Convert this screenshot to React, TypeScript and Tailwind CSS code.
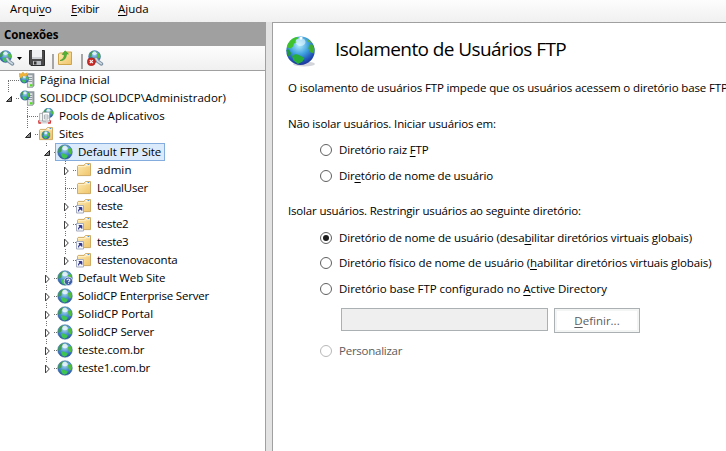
import type { ReactNode } from "react";

type TreeIcon =
  | "start"
  | "server"
  | "pools"
  | "sites"
  | "site"
  | "siteUnknown"
  | "folder"
  | "shortcut";

type Node = {
  label: string;
  level: number;
  icon: TreeIcon;
  state?: "open" | "closed";
  // guide line of the node's own level
  up?: boolean;
  down?: boolean;
  selected?: boolean;
  tracking?: string;
};

const nodes: Node[] = [
  { label: "Página Inicial", level: 0, icon: "start", down: true },
  { label: "SOLIDCP (SOLIDCP\\Administrador)", level: 0, icon: "server", state: "open", up: true, tracking: "tracking-[0.03px]" },
  { label: "Pools de Aplicativos", level: 1, icon: "pools", up: true, down: true },
  { label: "Sites", level: 1, icon: "sites", state: "open", up: true, tracking: "tracking-[-0.15px]" },
  { label: "Default FTP Site", level: 2, icon: "site", state: "open", up: true, down: true, selected: true, tracking: "tracking-[-0.05px]" },
  { label: "admin", level: 3, icon: "folder", state: "closed", up: true, down: true, tracking: "tracking-[0.1px]" },
  { label: "LocalUser", level: 3, icon: "folder", up: true, down: true, tracking: "tracking-[-0.18px]" },
  { label: "teste", level: 3, icon: "shortcut", state: "closed", up: true, down: true, tracking: "tracking-[-0.15px]" },
  { label: "teste2", level: 3, icon: "shortcut", state: "closed", up: true, down: true, tracking: "tracking-[-0.3px]" },
  { label: "teste3", level: 3, icon: "shortcut", state: "closed", up: true, down: true, tracking: "tracking-[-0.3px]" },
  { label: "testenovaconta", level: 3, icon: "shortcut", state: "closed", up: true, tracking: "tracking-[-0.15px]" },
  { label: "Default Web Site", level: 2, icon: "siteUnknown", state: "closed", up: true, down: true, tracking: "tracking-[-0.1px]" },
  { label: "SolidCP Enterprise Server", level: 2, icon: "site", state: "closed", up: true, down: true, tracking: "tracking-[-0.19px]" },
  { label: "SolidCP Portal", level: 2, icon: "site", state: "closed", up: true, down: true },
  { label: "SolidCP Server", level: 2, icon: "site", state: "closed", up: true, down: true, tracking: "tracking-[-0.1px]" },
  { label: "teste.com.br", level: 2, icon: "site", state: "closed", up: true, down: true, tracking: "tracking-[-0.08px]" },
  { label: "teste1.com.br", level: 2, icon: "site", state: "closed", up: true, tracking: "tracking-[-0.15px]" },
];

function Globe() {
  return (
    <g>
      <circle cx="8" cy="8" r="7.3" fill="url(#ocean)" stroke="#3b629c" strokeWidth="0.5" />
      <path d="M1.2 8.4 1.6 5 4 2.2 6.6 1.2 6.2 3.2 4.4 4.6 4.6 6.8 3 8.6z" fill="#3f9c4a" />
      <path d="M11 5.2 12.4 4 14 4.6 14.9 7.4 14.4 10 12.6 10.2 11.4 8z" fill="#4fc03a" />
      <path d="M4 10 6.4 9.2 8.6 10.4 11 11.4 9.6 13.8 7.4 14.7 5 13.2z" fill="#3fc552" />
      <ellipse cx="8" cy="4" rx="2.8" ry="2.2" fill="#eef7fc" opacity="0.8" />
      <path d="M9 1.4 11.4 2 10.6 3.6z" fill="#5aa765" />
    </g>
  );
}

function Tower() {
  return (
    <g>
      <path d="M8 2.6 9.2 1.2H15.4V13.8L13.8 15.6H8z" fill="#8f989e" />
      <path d="M8.4 2.8H13.8V15.2H8.4z" fill="#dfe3e5" stroke="#8b9398" strokeWidth="0.6" />
      <path d="M9 5.5H13.2M9 7.5H13.2M9 9.5H13.2" stroke="#7d868c" strokeWidth="0.8" />
      <path d="M11 12.2H13.4V14.4H11z" fill="#4fe01c" />
    </g>
  );
}

function Folder() {
  return (
    <g>
      <path d="M1.5 4.2 2.2 3.4H8L9.4 1.6H14.5V13.6H1.5z" fill="url(#folder)" stroke="#c9a45a" strokeWidth="0.9" />
      <path d="M9.4 2.8H14" stroke="#fff" strokeWidth="1.4" />
      <path d="M11.6 2.6H13.4" stroke="#3d8fd2" strokeWidth="1" />
      <path d="M2 4.6H9.4L10.4 3.8H14" fill="none" stroke="#fff3cf" strokeWidth="0.8" />
    </g>
  );
}

function NodeIcon({ name }: { name: TreeIcon }) {
  return (
    <svg width="16" height="16" viewBox="0 0 16 16" className="shrink-0">
      {name === "start" && (
        <>
          <Tower />
          <g transform="translate(.6 2) scale(.6)"><Globe /></g>
          <path d="M0 1.4 2.4 1.8 4 0 5.4 1.8 8.4 .8 8 3.4 6.6 4.4 4.8 3.6 3 4.8 2.4 6.6 .6 5z" fill="#f0b43a" stroke="#cf9226" strokeWidth="0.4" />
        </>
      )}
      {name === "server" && (
        <>
          <Tower />
          <g transform="translate(.8 .2) scale(.66)"><Globe /></g>
        </>
      )}
      {name === "pools" && (
        <>
          <g transform="translate(5 -.4) scale(.68)"><Globe /></g>
          <path d="M1.6 5.4H8V13H1.6z" fill="#f7f7f7" stroke="#a0a4a8" strokeWidth="0.8" />
          <path d="M4.6 4.2H11.6V13H4.6z" fill="#fff" stroke="#8b9095" strokeWidth="0.8" />
          <path d="M6.4 7H10V11H6.4zM6.4 9H10" fill="none" stroke="#9ba2a8" strokeWidth="0.8" />
          <path d="M0.6 12.4 1 15H3M12.6 12.4 12.2 15H10" fill="none" stroke="#d23434" strokeWidth="1.3" />
          <path d="M3 14.8H10" stroke="#c6cacd" strokeWidth="1.2" />
        </>
      )}
      {name === "sites" && (
        <>
          <Folder />
          <g transform="translate(3.4 4.6) scale(.56)"><Globe /></g>
        </>
      )}
      {name === "site" && <Globe />}
      {name === "siteUnknown" && (
        <>
          <Globe />
          <circle cx="11.4" cy="11.3" r="4.2" fill="#3d5fa8" stroke="#dfe7f5" strokeWidth="0.9" />
          <path d="M9.9 10.2C10 8.6 13 8.7 12.9 10.3 12.8 11.2 11.5 11.2 11.5 12.3M11.5 13.2V14" fill="none" stroke="#fff" strokeWidth="1.1" />
        </>
      )}
      {name === "folder" && <Folder />}
      {name === "shortcut" && (
        <>
          <Folder />
          <path d="M.5 7.5H7.5V15H.5z" fill="#f4f6fb" stroke="#a5acc0" />
          <path d="M2.6 13.4C2.4 11.6 3 11 4.4 10.8M3 9.6H5.8V12.4z" fill="#2b2f86" stroke="#2b2f86" strokeWidth="1" />
        </>
      )}
    </svg>
  );
}

function Guide({ node }: { node: Node }) {
  return (
    <svg width="19" height="18" viewBox="0 0 19 18" className="shrink-0">
      <g stroke="#707070" strokeDasharray="1 1" shapeRendering="crispEdges">
        {node.up && <path d="M8.5 0V10" />}
        {node.down && <path d="M8.5 10V18" />}
        <path d="M8 9.5H19" />
      </g>
      {node.state && <path d="M3 3H15V16H3z" fill="#fff" />}
      {node.state === "closed" && (
        <path d="M7.500 6V14L11.300 10z" fill="#fff" stroke="#404040" />
      )}
      {node.state === "open" && (
        <path d="M11.500 7.500V12.500H6.500z" fill="#8a8a8a" stroke="#262626" />
      )}
    </svg>
  );
}

function TreeRow({ node }: { node: Node }) {
  return (
    <div className="flex h-[18px] items-center">
      {[0, 1, 2].slice(0, node.level).map((level) => (
        <svg key={level} width="19" height="18" className="shrink-0">
          {level === 2 && (
            <path d="M8.5 0V18" stroke="#707070" strokeDasharray="1 1" shapeRendering="crispEdges" />
          )}
        </svg>
      ))}
      <Guide node={node} />
      <div
        className={
          node.selected
            ? "-ml-0.5 flex h-[18px] w-[110px] items-center border border-[#84acdd] bg-[#dcebfc] pl-px"
            : "flex h-[18px] items-center"
        }
      >
        <NodeIcon name={node.icon} />
        <span className={"ml-[5px] whitespace-nowrap " + (node.tracking ?? "")}>{node.label}</span>
      </div>
    </div>
  );
}

function Key({ children }: { children: ReactNode }) {
  return <span className="underline decoration-1 underline-offset-2">{children}</span>;
}

function Radio({
  checked,
  disabled,
  className,
  children,
}: {
  checked?: boolean;
  disabled?: boolean;
  className: string;
  children: ReactNode;
}) {
  return (
    <label className={"flex h-[18px] items-center pl-[47px] " + className}>
      <span
        className={
          "mr-[7px] flex size-3 shrink-0 items-center justify-center rounded-full border bg-white " +
          (disabled ? "border-[#b8b8b8]" : "border-[#606060]")
        }
      >
        {checked && <span className="size-1.5 rounded-full bg-[#1c1c1c]" />}
      </span>
      <span className={"whitespace-nowrap " + (disabled ? "text-[#5c5c5c]" : "")}>{children}</span>
    </label>
  );
}

function GlobeTool({ remove }: { remove?: boolean }) {
  return (
    <svg width="17" height="16" viewBox="0 0 17 16" className="shrink-0">
      <g transform="translate(1 0) scale(.82)"><Globe /></g>
      <path d="M9 8.5 11 11.500 14.5 14" fill="none" stroke="#7f93a4" strokeWidth="3.4" strokeLinecap="round" />
      <path d="M9 8.5 11 11.500 14.2 13.700" fill="none" stroke="#cfdae3" strokeWidth="1.6" strokeLinecap="round" />
      {remove && (
        <>
          <circle cx="4.3" cy="11.7" r="4" fill="#cf2a26" stroke="#8e1712" strokeWidth="0.5" />
          <path d="M2.8 10.2 5.8 13.2M5.8 10.2 2.8 13.2" stroke="#fff" strokeWidth="1.2" />
        </>
      )}
    </svg>
  );
}

function Toolbar() {
  return (
    <div className="flex h-6 items-center bg-gradient-to-b from-[#fdfdfd] to-[#f0f0f0]">
      <div className="-ml-0.5"><GlobeTool /></div>
      <svg width="5" height="3" viewBox="0 0 5 3" className="ml-0.5">
        <path d="M0 0H5L2.5 3z" fill="#000" />
      </svg>
      <svg width="16" height="16" viewBox="0 0 16 16" className="ml-[7px]">
        <path d="M.5 .5H15.5V15.5H2L.5 14z" fill="#4a4a4a" stroke="#2d2d2d" />
        <path d="M3 0H13V9H3z" fill="#eef0f2" />
        <path d="M3 7H13V9H3z" fill="#cdd1d5" />
        <path d="M4 11H12V15H4z" fill="#b9bdc1" />
        <path d="M5 11.500H7.500V14.500H5z" fill="#333" />
      </svg>
      <span className="ml-[7px] mt-1.5 h-[15px] w-0.5 bg-[#a6a6a6]" />
      <svg width="15" height="16" viewBox="0 0 15 16" className="ml-1">
        <path d="M.5 4 1.500 3H7L8 2H13.500V14.500H.5z" fill="url(#folder)" stroke="#cfa54b" />
        <path d="M2 10.500C5 9.500 6.500 7.500 6.200 4.500H4.200L7 .8 10.500 4H8.500C8.500 8 6 11 2 10.500z" fill="#51b636" stroke="#2f8a1e" strokeWidth="0.5" />
      </svg>
      <span className="ml-[8px] mt-1.5 h-[15px] w-0.5 bg-[#a6a6a6]" />
      <div className="ml-1"><GlobeTool remove /></div>
    </div>
  );
}

export default function App() {
  return (
    <div className="flex h-[451px] w-[726px] flex-col overflow-hidden bg-[#e3e3e3] font-['Open_Sans','Noto_Sans',sans-serif] text-[11.5px] leading-[18px] text-black">
      <svg width="0" height="0" className="absolute">
        <defs>
          <radialGradient id="ocean" cx="0.48" cy="0.3" r="0.72">
            <stop offset="0" stopColor="#b5dcee" />
            <stop offset="0.5" stopColor="#4a93d2" />
            <stop offset="1" stopColor="#27509c" />
          </radialGradient>
          <radialGradient id="oceanLarge" cx="0.45" cy="0.3" r="0.72">
            <stop offset="0" stopColor="#b4ecfb" />
            <stop offset="0.45" stopColor="#41a3e0" />
            <stop offset="0.8" stopColor="#2053b8" />
            <stop offset="1" stopColor="#1b2f93" />
          </radialGradient>
          <linearGradient id="folder" x1="0" y1="0" x2="1" y2="1">
            <stop offset="0" stopColor="#fdebb4" />
            <stop offset="1" stopColor="#efc468" />
          </linearGradient>
        </defs>
      </svg>

      <nav className="flex h-[22px] shrink-0 bg-gradient-to-b from-[#fdfdfd] to-[#f0f0f0] pl-2.5">
        <span className="w-[61px]">Arqui<Key>v</Key>o</span>
        <span className="w-[47px] tracking-[-0.3px]"><Key>E</Key>xibir</span>
        <span><Key>A</Key>juda</span>
      </nav>

      <div className="flex min-h-0 flex-1">
        <aside className="flex w-[266px] shrink-0 flex-col border-r border-[#a0a0a0] bg-white">
          <h2 className="h-6 bg-[#a0a0a0] pl-1 font-bold leading-[25px] tracking-[-0.1px]">Conexões</h2>
          <Toolbar />
          <div className="border-t border-[#a0a0a0]">
            {nodes.map((node) => (
              <TreeRow key={node.label} node={node} />
            ))}
          </div>
        </aside>

        <main className="ml-1.5 flex-1 overflow-hidden border-l border-t border-[#a0a0a0] bg-white">
          <header className="mt-[13px] flex h-[30px] items-center pl-[13px]">
            <svg width="30" height="31" viewBox="0 0 30 31" className="shrink-0">
              <ellipse cx="18" cy="28" rx="11" ry="2.4" fill="#d3d5da" />
              <circle cx="14.5" cy="14.8" r="14.2" fill="url(#oceanLarge)" />
              <path d="M.8 11C2 6 5.500 2 11 1L13 2.500 9.500 4 11 6.500 8 7.500 7 10.500 4.500 12.500 2.500 12z" fill="#3fc32c" />
              <path d="M.4 14 3 13.500 5 17 4 20.500 2 20z" fill="#1f9a3a" />
              <path d="M23 9 26 8 28.500 13 27.500 17.500 24 16 22.500 12.500z" fill="#3fae30" />
              <path d="M20 2.500 24 5 26 7 22.500 6z" fill="#5ab52f" />
              <path d="M6 20 9.500 18 13 19 18.500 22 16.500 25.500 12 28 7.500 24.500z" fill="#27ad3c" />
              <ellipse cx="14.5" cy="6" rx="5" ry="4" fill="#e8faff" opacity="0.6" />
              <path d="M13.500 1H16.500L16 3.500H13.800z" fill="#fff" />
            </svg>
            <h1 className="-mt-[5px] ml-[19px] whitespace-nowrap text-[19px] leading-6 tracking-[-0.58px]">
              Isolamento de Usuários FTP
            </h1>
          </header>
          <p className="mt-[13px] whitespace-nowrap pl-[15px] tracking-[-0.13px]">
            O isolamento de usuários FTP impede que os usuários acessem o diretório base FTP
          </p>
          <p className="mt-[18px] pl-[15px] tracking-[-0.15px]">Não isolar usuários. Iniciar usuários em:</p>
          <Radio className="mt-2 tracking-[-0.17px]">Diretório raiz <Key>F</Key>TP</Radio>
          <Radio className="mt-2 tracking-[-0.16px]">Dir<Key>e</Key>tório de nome de usuário</Radio>
          <p className="mt-[17px] pl-[15px] tracking-[-0.17px]">
            Isolar usuários. Restringir usuários ao seguinte diretório:
          </p>
          <Radio checked className="mt-[9px] tracking-[-0.14px]">
            Diretório de nome de usuário (desa<Key>b</Key>ilitar diretórios virtuais globais)
          </Radio>
          <Radio className="mt-[7px] tracking-[-0.12px]">
            Diretório físico de nome de usuário (<Key>h</Key>abilitar diretórios virtuais globais)
          </Radio>
          <Radio className="mt-2 tracking-[-0.05px]">
            Diretório base FTP configurado no <Key>A</Key>ctive Directory
          </Radio>
          <div className="mt-2.5 flex pl-[68px]">
            <input disabled className="h-[23px] w-[207px] border border-[#abb0b2] bg-[#efefef]" />
            <button disabled className="ml-1.5 h-[25px] w-[86px] border border-[#abb0b2] bg-white text-[#5c5c5c] ring-2 ring-inset ring-[#f3f4f4]">
              <Key>D</Key>efinir...
            </button>
          </div>
          <Radio disabled className="mt-[9px] tracking-[-0.25px]">Personalizar</Radio>
        </main>
      </div>
    </div>
  );
}
